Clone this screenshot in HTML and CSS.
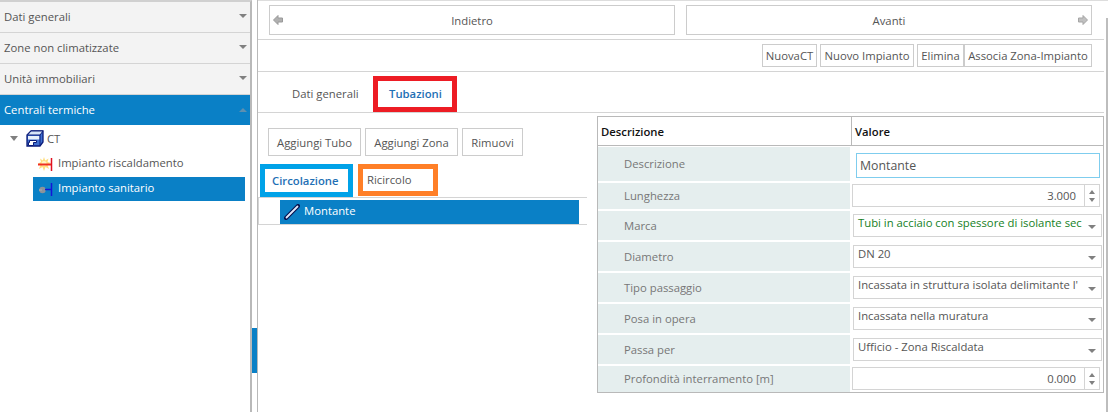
FILE: index.html
```html
<!DOCTYPE html>
<html lang="en">
<head>
    <meta charset="UTF-8">
    <meta name="viewport" content="width=device-width, initial-scale=1.0">
    <title>Centrali termiche</title>
    <link rel="stylesheet" href="styles.css">
</head>
<body>
    <div class="app">
        <!-- Left accordion -->
        <aside class="side">
            <div class="acc"><span>Dati generali</span><i class="arrow-down"></i></div>
            <div class="acc"><span>Zone non climatizzate</span><i class="arrow-down"></i></div>
            <div class="acc"><span>Unità immobiliari</span><i class="arrow-down"></i></div>
            <div class="acc acc-open"><span>Centrali termiche</span><i class="arrow-up"></i></div>
            <div class="tree">
                <div class="node-root">
                    <i class="arrow-tree"></i>
                    <svg class="icon-ct" width="18" height="17" viewBox="0 0 18 17">
                        <path d="M5 1h12v11l-3 4H1V5z" fill="#3f6fd0" stroke="#0a1a78" stroke-width="1.300"/>
                        <path d="M5 1 1.500 5H14l3-4z" fill="#d6e4f8" stroke="#0a1a78"/>
                        <path d="M2 6h11.500v3.500H2z" fill="#e8f0fb"/>
                        <path d="M14 5v11" stroke="#0a1a78"/>
                        <path d="M3.500 10.500h7v2H7.500v3h-5v-3h1z" fill="#fff" stroke="#0a1a78"/>
                    </svg>
                    <span>CT</span>
                </div>
                <div class="node">
                    <svg width="15" height="15" viewBox="0 0 15 15">
                        <path d="M6 0l1.200 3.500L10.500 1.500 9.500 5 13 6 9.500 7.500 11 12 7.500 10 6 14 4.500 10 1 12l1.500-4.500L0 6.500 3 5 2 1.500l2.800 2z" fill="#ffdf80"/>
                        <circle cx="6" cy="6.500" r="2.500" fill="#fff6c8"/>
                        <path d="M0 7.500h13" stroke="#f03020" stroke-width="2"/>
                        <path d="M13.500 1v13" stroke="#e01020" stroke-width="1.500"/>
                    </svg>
                    <span class="node-text">Impianto riscaldamento</span>
                </div>
                <div class="node node-sel">
                    <svg width="15" height="15" viewBox="0 0 15 15">
                        <circle cx="4.500" cy="8" r="3.200" fill="#8c9299"/>
                        <path d="M1 8h3" stroke="#9aa0a6" stroke-width="2"/>
                        <path d="M7 7.500h6" stroke="#1414d8" stroke-width="1.500"/>
                        <path d="M13.500 1v13" stroke="#1414d8" stroke-width="1.500"/>
                    </svg>
                    <span class="node-text">Impianto sanitario</span>
                </div>
            </div>
        </aside>

        <div class="splitter"><div class="splitter-grip"></div></div>

        <main class="main">
            <div class="main-inner">
                <div class="nav-row">
                    <button class="nav-btn">
                        <svg class="nav-left" width="10" height="10" viewBox="0 0 10 10"><path d="M5 .5v2.500h4.500v4H5v2.500L.5 5z" fill="#b0b0b0" stroke="#999"/></svg>
                        Indietro
                    </button>
                    <button class="nav-btn">
                        Avanti
                        <svg class="nav-right" width="10" height="10" viewBox="0 0 10 10"><path d="M5 .5v2.500H.5v4H5v2.500L9.500 5z" fill="#c0c0c0" stroke="#a5a5a5"/></svg>
                    </button>
                </div>

                <div class="tool-row">
                    <button class="tool-btn tb-nuova">NuovaCT</button>
                    <button class="tool-btn tb-impianto">Nuovo Impianto</button>
                    <button class="tool-btn tb-elimina">Elimina</button>
                    <button class="tool-btn tb-associa">Associa Zona-Impianto</button>
                </div>

                <div class="tab-row">
                    <div class="tab">Dati generali</div>
                    <div class="tab tab-active">Tubazioni</div>
                </div>

                <div class="body-row">
                    <section class="pipes">
                        <div class="pipe-actions">
                            <button class="pipe-btn pb-tubo">Aggiungi Tubo</button>
                            <button class="pipe-btn pb-zona">Aggiungi Zona</button>
                            <button class="pipe-btn pb-rimuovi">Rimuovi</button>
                        </div>
                        <div class="subtabs">
                            <div class="subtab subtab-active">Circolazione</div>
                            <div class="subtab subtab-other">Ricircolo</div>
                        </div>
                        <div class="pipe-list">
                            <div class="pipe-item">
                                <svg width="16" height="16" viewBox="0 0 16 16">
                                    <path d="M2 14 14 2" stroke="#07104d" stroke-width="4" stroke-linecap="round"/>
                                    <path d="M2.500 13.500 13.500 2.500" stroke="#dfe9fb" stroke-width="1.800" stroke-linecap="round"/>
                                </svg>
                                <span>Montante</span>
                            </div>
                        </div>
                    </section>

                    <section class="props">
                        <div class="props-head">
                            <div class="head-name">Descrizione</div>
                            <div class="head-value">Valore</div>
                        </div>
                        <div class="props-grid">
                            <div class="prop-label">Descrizione</div>
                            <div class="prop-value"><div class="text-input">Montante</div></div>

                            <div class="prop-label">Lunghezza</div>
                            <div class="prop-value">
                                <div class="num-input"><span class="num-text">3.000</span><span class="spin"><i class="spin-up"></i><i class="spin-down"></i></span></div>
                            </div>

                            <div class="prop-label">Marca</div>
                            <div class="prop-value">
                                <div class="combo combo-green"><span class="combo-text">Tubi in acciaio con spessore di isolante sec</span><i class="arrow-down"></i></div>
                            </div>

                            <div class="prop-label">Diametro</div>
                            <div class="prop-value">
                                <div class="combo"><span class="combo-text">DN 20</span><i class="arrow-down"></i></div>
                            </div>

                            <div class="prop-label">Tipo passaggio</div>
                            <div class="prop-value">
                                <div class="combo"><span class="combo-text">Incassata in struttura isolata delimitante l'</span><i class="arrow-down"></i></div>
                            </div>

                            <div class="prop-label">Posa in opera</div>
                            <div class="prop-value">
                                <div class="combo"><span class="combo-text">Incassata nella muratura</span><i class="arrow-down"></i></div>
                            </div>

                            <div class="prop-label">Passa per</div>
                            <div class="prop-value">
                                <div class="combo"><span class="combo-text">Ufficio - Zona Riscaldata</span><i class="arrow-down"></i></div>
                            </div>

                            <div class="prop-label">Profondità interramento [m]</div>
                            <div class="prop-value">
                                <div class="num-input"><span class="num-text">0.000</span><span class="spin"><i class="spin-up"></i><i class="spin-down"></i></span></div>
                            </div>
                        </div>
                    </section>
                </div>
            </div>
            <div class="vscroll"><div class="vscroll-bar"></div></div>
        </main>
    </div>
</body>
</html>
```

FILE: styles.css
```css
* {
    margin: 0;
    padding: 0;
    box-sizing: border-box;
}

html, body {
    height: 412px;
    overflow: hidden;
}

body {
    font-family: "Open Sans", "Noto Sans", sans-serif;
    font-size: 11.3px;
    color: #555;
    background: #fff;
}

button {
    font: inherit;
    color: #555;
    background: #fff;
    border: 1px solid #ccc;
}

.app {
    display: flex;
    height: 412px;
}

/* Left accordion */
.side {
    width: 252px;
    border-top: 2px solid #d0d0d0;
    border-right: 2px solid #b9b9b9;
}

.acc {
    height: 31px;
    padding: 0 3px 2px 4px;
    display: flex;
    align-items: center;
    justify-content: space-between;
    background: #f3f3f3;
    border-bottom: 1px solid #d4d4d4;
}

.acc-open {
    height: 30px;
    padding-bottom: 1px;
    background: #0a80c6;
    color: #fff;
    border-bottom: 0;
}

.arrow-down, .arrow-up {
    display: block;
    width: 0;
    height: 0;
    border-left: 4px solid transparent;
    border-right: 4px solid transparent;
}

.arrow-down {
    border-top: 4px solid #808080;
}

.arrow-up {
    border-bottom: 4px solid #5d8fb0;
}

.tree {
    padding: 0 5px 0 2px;
}

.node-root {
    height: 26px;
    display: flex;
    align-items: center;
    padding-left: 8px;
}

.arrow-tree {
    width: 0;
    height: 0;
    border-left: 4.500px solid transparent;
    border-right: 4.500px solid transparent;
    border-top: 5px solid #808080;
    margin-right: 8px;
}

.icon-ct {
    margin-right: 3px;
}

.node {
    height: 24px;
    margin-left: 31px;
    padding-left: 5px;
    display: flex;
    align-items: center;
    gap: 5px;
    margin-top: 1px;
}

.node-text {
    padding-bottom: 3px;
}

.node-sel {
    background: #0a80c6;
    color: #fff;
}

.splitter {
    width: 6px;
    border-right: 1px solid #b9b9b9;
    padding-top: 328px;
}

.splitter-grip {
    height: 45px;
    background: #0a80c6;
}

/* Right side */
.main {
    flex: 1;
    min-width: 0;
    display: flex;
    border-top: 1px solid #ddd;
}

.main-inner {
    flex: 1;
    min-width: 0;
}

.vscroll {
    width: 4px;
    padding: 17px 0 0 2px;
}

.vscroll-bar {
    height: 100%;
    background: #bdbdbd;
}

.nav-row {
    height: 39px;
    padding: 4px 11px 0;
    display: flex;
    gap: 11px;
    border-bottom: 1px solid #d4d4d4;
}

.nav-btn {
    width: 406px;
    height: 30px;
    position: relative;
}

.nav-left, .nav-right {
    position: absolute;
    top: 9px;
}

.nav-left {
    left: 3px;
}

.nav-right {
    right: 3px;
}

.tool-row {
    height: 32px;
    padding: 4px 12px 0 0;
    display: flex;
    justify-content: flex-end;
    gap: 3px;
    border-bottom: 1px solid #d4d4d4;
}

.tool-btn {
    height: 23px;
}

.tb-nuova { width: 55px; }
.tb-impianto { width: 94px; }
.tb-elimina { width: 47px; margin-right: -3px; }
.tb-associa { width: 128px; }

.tab-row {
    height: 41px;
    display: flex;
    padding: 4px 0 0 24px;
    border-bottom: 1px solid #d4d4d4;
}

.tab {
    height: 36px;
    width: 91px;
    padding-left: 10px;
    padding-bottom: 1px;
    display: flex;
    align-items: center;
}

.tab-active {
    width: 84px;
    padding-left: 11px;
    border: 5px solid #ed1c24;
    color: #1f70b5;
    font-weight: 600;
    background: #fff;
}

.body-row {
    display: flex;
    align-items: flex-start;
    padding-top: 3px;
}

.pipes {
    width: 339px;
    flex-shrink: 0;
}

.pipe-actions {
    display: flex;
    gap: 4px;
    padding: 12px 0 0 10px;
}

.pipe-btn {
    height: 28px;
}

.pb-tubo, .pb-zona { width: 93px; }
.pb-rimuovi { width: 61px; }

.subtabs {
    display: flex;
    gap: 5px;
    padding: 8px 0 0 2px;
}

.subtab {
    height: 33px;
    display: flex;
    align-items: center;
    padding-bottom: 1px;
}

.subtab-active {
    width: 93px;
    padding-left: 7px;
    border: 5px solid #00a2e8;
    color: #1f70b5;
    font-weight: 600;
}

.subtab-other {
    width: 80px;
    height: 32px;
    padding-left: 4px;
    border: 5px solid #ff7f27;
}

.pipe-list {
    width: 329px;
    height: 28px;
    padding: 2px 8px 0 21px;
    border-top: 1px solid #d4d4d4;
    border-bottom: 1px solid #d4d4d4;
    border-left: 1px solid #d4d4d4;
}

.pipe-item {
    height: 24px;
    padding: 0 0 0 4px;
    background: #0a80c6;
    color: #fff;
    display: flex;
    align-items: center;
    gap: 4px;
}

.pipe-item span {
    padding-bottom: 3px;
}

/* Property grid */
.props {
    width: 507px;
    border: 1px solid #b9b9b9;
}

.props-head {
    height: 29px;
    display: grid;
    grid-template-columns: 254px 1fr;
    border-bottom: 1px solid #b9b9b9;
    color: #111;
    font-weight: 600;
}

.head-name, .head-value {
    display: flex;
    align-items: center;
    padding-left: 3px;
}

.head-name {
    border-right: 1px solid #b9b9b9;
}

.props-grid {
    padding-top: 1px;
    display: grid;
    grid-template-columns: 252px 1fr;
    grid-template-rows: 34px 26px 29px 29px 29px 29px 29px 26px;
    row-gap: 2px;
    color: #777;
}

.prop-label {
    background: #e5eeee;
    padding: 0 0 1px 26px;
    display: flex;
    align-items: center;
}

.prop-value {
    display: flex;
    align-items: flex-start;
    color: #555;
    padding-left: 2px;
}

.text-input {
    width: 244px;
    height: 25px;
    margin: 6px 0 0 4px;
    padding-left: 3px;
    border: 1px solid #7fcdee;
    font-size: 12.300px;
    line-height: 24px;
}

.num-input {
    width: 248px;
    height: 23px;
    margin-top: 1px;
    display: flex;
    align-items: center;
    border: 1px solid #d4d4d4;
}

.num-text {
    padding: 0 8px 1px 0;
    margin-left: auto;
}

.spin {
    width: 15px;
    height: 100%;
    border-left: 1px solid #d4d4d4;
    display: flex;
    flex-direction: column;
    align-items: center;
    justify-content: center;
    gap: 4px;
}

.spin-up, .spin-down {
    width: 0;
    height: 0;
    border-left: 3.500px solid transparent;
    border-right: 3.500px solid transparent;
}

.spin-up {
    border-bottom: 4px solid #808080;
}

.spin-down {
    border-top: 4px solid #808080;
}

.combo {
    width: 249px;
    height: 23px;
    margin: 3px 0 0 1px;
    padding: 0 5px 0 4px;
    display: flex;
    justify-content: space-between;
    border: 1px solid #d4d4d4;
    line-height: 15px;
}

.combo-text {
    white-space: nowrap;
}

.combo .arrow-down {
    margin-top: 10px;
}

.combo-green {
    color: #15801e;
}
```
